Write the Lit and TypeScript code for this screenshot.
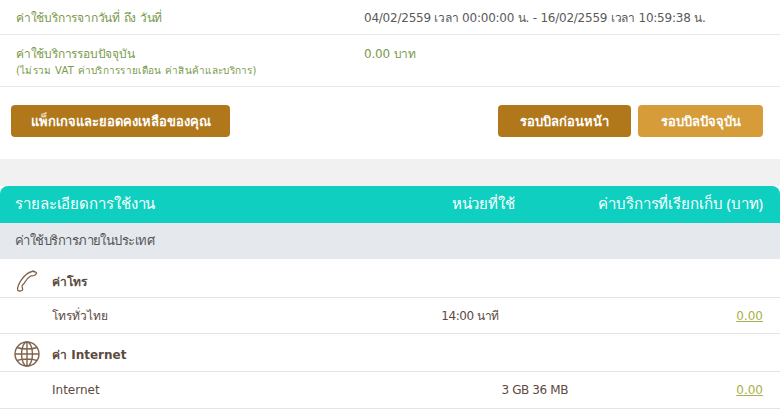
import { LitElement, html, css } from "lit";
import { customElement } from "lit/decorators.js";

const phone = html`<svg width="26" height="26" viewBox="0 0 26 26" fill="none" stroke="#80634f" stroke-width="1.3">
  <path d="M19.500 3c-4.800 1-9.500 4.600-12.500 9.400C4.800 15.800 3.500 19.300 3.600 21.700c.1 1 .9 1.500 2.100 1.300l1.700-.3c1-.2 1.400-.9 1.200-1.800l-.5-2.500c-.1-.6.100-1.100.5-1.500l1.200-1.100c.4-.4.600-.9 1-1.600 1.400-2.500 3.300-4.600 5.400-6 .5-.3.900-.3 1.500-.4l2-.2c.8-.1 1.300-.3 1.800-.9l.8-1c.4-.5.200-1.100-.4-1.500-.7-.4-1.500-.5-2-.4z"/>
</svg>`;

const globe = html`<svg width="26" height="26" viewBox="0 0 26 26" fill="none" stroke="#80634f" stroke-width="1.4">
  <circle cx="13" cy="13" r="12"/>
  <ellipse cx="13" cy="13" rx="5.500" ry="12"/>
  <path d="M13 1v24M1 13h24M3 6.500c5 2 15 2 20 0M3 19.500c5-2 15-2 20 0"/>
</svg>`;

@customElement("app-root")
export class AppRoot extends LitElement {
  static styles = css`
    :host {
      display: block;
      width: 780px;
      height: 410px;
      overflow: hidden;
      background: #fff;
      font-family: Tahoma, "DejaVu Sans", "Noto Sans", sans-serif;
      font-size: 12px;
      color: #5d4a3f;
    }
    .info {
      display: grid;
      grid-template-columns: 348px 1fr;
      padding-left: 16px;
      border-bottom: 1px solid #e8e8e8;
      color: #7a9a4c;
    }
    .info.a { height: 34px; align-items: center; }
    .info.b { height: 52px; padding-top: 9px; box-sizing: border-box; }
    .lead { letter-spacing: -0.2px; }
    .date { color: #5a5a5a; letter-spacing: -0.23px; }
    .note { font-size: 10px; letter-spacing: 0.27px; }
    .actions {
      display: flex;
      align-items: center;
      padding: 18px 17px 22px 11px;
      gap: 7px;
    }
    .btn {
      height: 32px;
      border-radius: 4px;
      background: #b1781b;
      color: #fff;
      font-family: "Noto Sans", Inter, sans-serif;
      font-weight: 700;
      font-size: 13px;
      display: flex;
      align-items: center;
      justify-content: center;
    }
    .w1 { width: 219px; margin-right: auto; }
    .w2 { width: 133px; }
    .w3 { width: 125px; background: #d59c39; }
    .band { height: 27px; background: #f1f1f1; }
    .head {
      height: 37px;
      box-sizing: border-box;
      background: #0ecfc0;
      border-radius: 8px 8px 0 0;
      color: #fff;
      font-family: "Noto Sans", Inter, sans-serif;
      font-size: 15px;
      letter-spacing: -0.1px;
      display: grid;
      grid-template-columns: 1fr auto 248px;
      align-items: center;
      padding: 0 17px 2px 15px;
    }
    .head .r { text-align: right; }
    .sub {
      height: 36px;
      box-sizing: border-box;
      background: #e5e8ed;
      padding: 0 0 2px 15px;
      display: flex;
      align-items: center;
      font-family: "Noto Sans", Inter, sans-serif;
      font-size: 13px;
      letter-spacing: -0.55px;
      color: #555;
    }
    .cat {
      display: flex;
      align-items: center;
      height: 38px;
      border-bottom: 1px solid #e4e4e4;
      padding: 3px 0 0 14px;
      box-sizing: border-box;
      font-weight: 700;
      gap: 12px;
    }
    .cat.first { height: 39px; padding-top: 6px; }
    .row {
      display: grid;
      grid-template-columns: 1fr auto 264px;
      align-items: center;
      height: 36px;
      padding: 0 17px 0 52px;
      border-bottom: 1px solid #e4e4e4;
      box-sizing: border-box;
    }
    .row .u { letter-spacing: -0.4px; }
    .row .amt {
      text-align: right;
      color: #a8b04a;
      text-decoration: underline;
    }
    .row.l { height: 37px; grid-template-columns: 1fr auto 195px; }
  `;

  render() {
    return html`
      <div class="info a">
        <div class="lead">ค่าใช้บริการจากวันที่ ถึง วันที่</div>
        <div class="date">04/02/2559 เวลา 00:00:00 น. - 16/02/2559 เวลา 10:59:38 น.</div>
      </div>
      <div class="info b">
        <div>
          <div class="lead">ค่าใช้บริการรอบปัจจุบัน</div>
          <div class="note">(ไม่รวม VAT ค่าบริการรายเดือน ค่าสินค้าและบริการ)</div>
        </div>
        <div class="lead">0.00 บาท</div>
      </div>
      <div class="actions">
        <div class="btn w1">แพ็กเกจและยอดคงเหลือของคุณ</div>
        <div class="btn w2">รอบบิลก่อนหน้า</div>
        <div class="btn w3">รอบบิลปัจจุบัน</div>
      </div>
      <div class="band"></div>
      <div class="head">
        <div>รายละเอียดการใช้งาน</div>
        <div>หน่วยที่ใช้</div>
        <div class="r">ค่าบริการที่เรียกเก็บ (บาท)</div>
      </div>
      <div class="sub">ค่าใช้บริการภายในประเทศ</div>
      <div class="cat first">${phone}<span>ค่าโทร</span></div>
      <div class="row"><div>โทรทั่วไทย</div><div class="u">14:00 นาที</div><div class="amt">0.00</div></div>
      <div class="cat">${globe}<span>ค่า Internet</span></div>
      <div class="row l"><div>Internet</div><div class="u">3 GB 36 MB</div><div class="amt">0.00</div></div>
    `;
  }
}
